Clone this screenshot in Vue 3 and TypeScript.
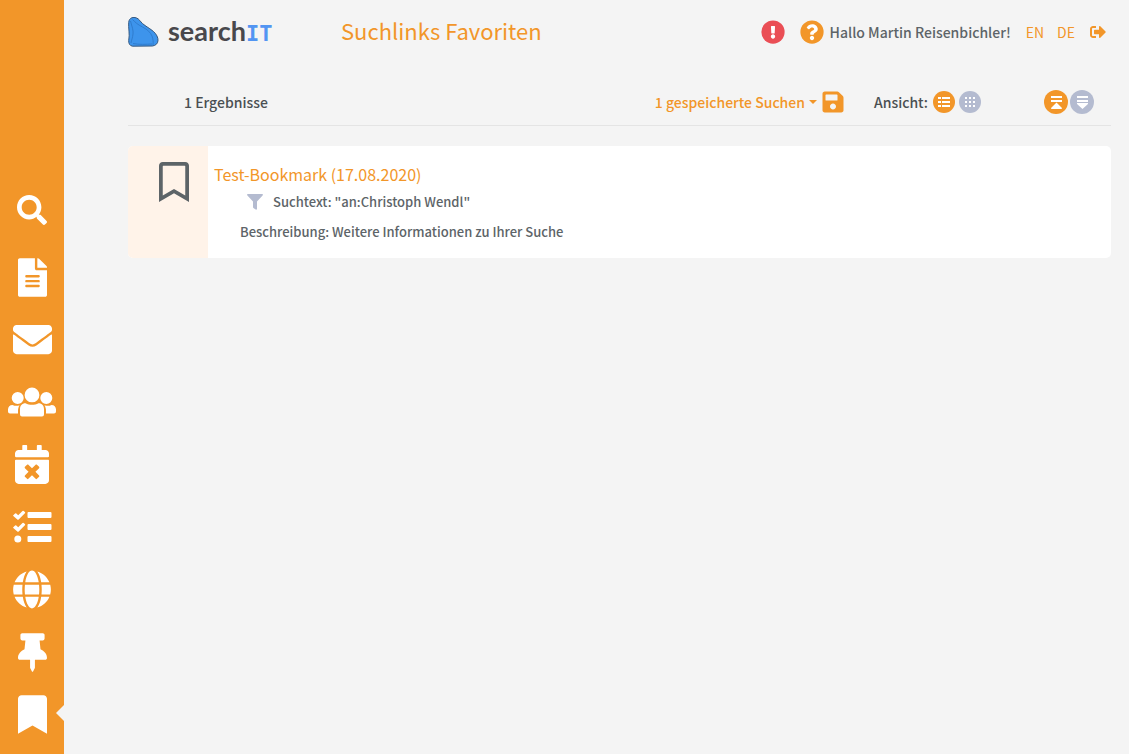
<script setup lang="ts">
import { ref } from 'vue'

interface NavItem {
  id: string
  label: string
  viewBox: string
  width: number
  height: number
  path: string
}

const navItems: NavItem[] = [
  { id: 'search', label: 'Suche', viewBox: '0 0 512 512', width: 30, height: 30, path: 'M505 442.7L405.3 343c-4.5-4.5-10.6-7-17-7H372c27.6-35.3 44-79.7 44-128C416 93.1 322.9 0 208 0S0 93.1 0 208s93.1 208 208 208c48.3 0 92.7-16.4 128-44v16.3c0 6.4 2.5 12.5 7 17l99.7 99.7c9.4 9.4 24.6 9.4 33.9 0l28.3-28.3c9.4-9.4 9.4-24.6.1-34zM208 336c-70.7 0-128-57.2-128-128 0-70.7 57.2-128 128-128 70.7 0 128 57.2 128 128 0 70.7-57.2 128-128 128z' },
  { id: 'files', label: 'Dokumente', viewBox: '0 0 384 512', width: 29, height: 39, path: 'M224 136V0H24C10.7 0 0 10.7 0 24v464c0 13.3 10.7 24 24 24h336c13.3 0 24-10.7 24-24V160H248c-13.2 0-24-10.8-24-24zm64 236c0 6.6-5.4 12-12 12H108c-6.6 0-12-5.4-12-12v-8c0-6.6 5.4-12 12-12h168c6.6 0 12 5.4 12 12v8zm0-64c0 6.6-5.4 12-12 12H108c-6.6 0-12-5.4-12-12v-8c0-6.6 5.4-12 12-12h168c6.6 0 12 5.4 12 12v8zm0-72v8c0 6.6-5.4 12-12 12H108c-6.6 0-12-5.4-12-12v-8c0-6.6 5.4-12 12-12h168c6.6 0 12 5.4 12 12zm96-114.1v6.1H256V0h6.1c6.4 0 12.5 2.5 17 7l97.9 98c4.5 4.5 7 10.6 7 16.9z' },
  { id: 'mail', label: 'E-Mails', viewBox: '0 0 512 512', width: 39, height: 39, path: 'M502.3 190.8c3.9-3.1 9.7-.2 9.7 4.7V400c0 26.5-21.5 48-48 48H48c-26.5 0-48-21.5-48-48V195.6c0-5 5.7-7.8 9.7-4.7 22.4 17.4 52.1 39.5 154.1 113.6 21.1 15.4 56.7 47.8 92.2 47.6 35.7.3 72-32.8 92.3-47.6 102-74.1 131.6-96.3 154-113.7zM256 320c23.2.4 56.6-29.2 73.4-41.4 132.7-96.3 142.8-104.7 173.4-128.7 5.8-4.5 9.2-11.5 9.2-18.9v-19c0-26.5-21.5-48-48-48H48c-26.5 0-48 21.5-48 48v19c0 7.4 3.4 14.3 9.2 18.9 30.6 23.9 40.7 32.4 173.4 128.7 16.8 12.2 50.2 41.8 73.4 41.4z' },
  { id: 'people', label: 'Kontakte', viewBox: '0 0 48 30', width: 48, height: 30, path: 'M24 .5a7.4 7.4 0 1 1 0 14.8a7.4 7.4 0 0 1 0-14.8zM9.7 5a6 6 0 1 1 0 12a6 6 0 0 1 0-12zM38.3 5a6 6 0 1 1 0 12a6 6 0 0 1 0-12zM17.5 16.2c4 2 9 2 13 0c3.5 0 5.5 2.5 5.5 6v5.3q0 2-2 2h-20q-2 0-2-2v-5.3c0-3.5 2-6 5.5-6zM4.5 18c1.8 1 5 1.2 7 .3c-1 1.7-1.5 3.5-1.5 5.7v2.5h-8q-2 0-2-2v-2c0-2.7 1.8-4.5 4.5-4.5zM43.5 18c-1.8 1-5 1.2-7 .3c1 1.7 1.5 3.5 1.5 5.7v2.5h8q2 0 2-2v-2c0-2.7-1.8-4.5-4.5-4.5z' },
  { id: 'calendar', label: 'Termine', viewBox: '0 0 448 512', width: 34, height: 39, path: 'M436 160H12c-6.6 0-12-5.4-12-12v-36c0-26.5 21.5-48 48-48h48V12c0-6.6 5.4-12 12-12h40c6.6 0 12 5.4 12 12v52h128V12c0-6.6 5.4-12 12-12h40c6.6 0 12 5.4 12 12v52h48c26.5 0 48 21.5 48 48v36c0 6.6-5.4 12-12 12zM12 192h424c6.6 0 12 5.4 12 12v260c0 26.5-21.5 48-48 48H48c-26.5 0-48-21.5-48-48V204c0-6.6 5.4-12 12-12zm257.3 160l48.1-48.1c4.7-4.7 4.7-12.3 0-17l-28.3-28.3c-4.7-4.7-12.3-4.7-17 0L224 306.7l-48.1-48.1c-4.7-4.7-12.3-4.7-17 0l-28.3 28.3c-4.7 4.7-4.7 12.3 0 17l48.1 48.1-48.1 48.1c-4.7 4.7-4.7 12.3 0 17l28.3 28.3c4.7 4.7 12.3 4.7 17 0l48.1-48.1 48.1 48.1c4.7 4.7 12.3 4.7 17 0l28.3-28.3c4.7-4.7 4.7-12.3 0-17L269.3 352z' },
  { id: 'tasks', label: 'Aufgaben', viewBox: '0 0 39 34', width: 39, height: 34, path: 'M15.5 2h22q1 0 1 1v4q0 1-1 1h-22q-1 0-1-1v-4q0-1 1-1zM15.5 14h22q1 0 1 1v4q0 1-1 1h-22q-1 0-1-1v-4q0-1 1-1zM15.5 26h22q1 0 1 1v4q0 1-1 1h-22q-1 0-1-1v-4q0-1 1-1zM4.8 25.5a3.5 3.5 0 1 1 0 7a3.5 3.5 0 0 1 0-7zM.3 5.2l1.8-1.8q.6-.5 1.2 0l1.9 1.8l4.3-4.3q.6-.5 1.2 0l1.2 1.2q.5.6 0 1.2l-6.2 6.2q-.7.6-1.4 0l-4-3.5q-.5-.5 0-.8zM.3 17.2l1.8-1.8q.6-.5 1.2 0l1.9 1.8l4.3-4.3q.6-.5 1.2 0l1.2 1.2q.5.6 0 1.2l-6.2 6.2q-.7.6-1.4 0l-4-3.5q-.5-.5 0-.8z' },
  { id: 'web', label: 'Web', viewBox: '0 0 496 512', width: 38, height: 39, path: 'M336.5 160C322 70.7 287.8 8 248 8s-74 62.7-88.5 152h177zM152 256c0 22.2 1.2 43.5 3.3 64h185.3c2.1-20.5 3.3-41.8 3.3-64s-1.2-43.5-3.3-64H155.3c-2.1 20.5-3.3 41.8-3.3 64zm324.7-96c-28.6-67.9-86.5-120.4-158-141.6 24.4 33.8 41.2 84.7 50 141.6h108zM177.2 18.4C105.8 39.6 47.8 92.1 19.3 160h108c8.7-56.9 25.5-107.8 49.9-141.6zM487.4 192H372.7c2.1 21 3.3 42.5 3.3 64s-1.2 43-3.3 64h114.6c5.5-20.5 8.6-41.8 8.6-64s-3.1-43.5-8.5-64zM120 256c0-21.5 1.2-43 3.3-64H8.6C3.2 212.5 0 233.8 0 256s3.2 43.5 8.6 64h114.6c-2-21-3.2-42.5-3.2-64zm39.5 96c14.5 89.3 48.7 152 88.5 152s74-62.7 88.5-152h-177zm159.3 141.6c71.4-21.2 129.4-73.7 158-141.6h-108c-8.8 56.9-25.6 107.8-50 141.6zM19.3 352c28.6 67.9 86.5 120.4 158 141.6-24.4-33.8-41.2-84.7-50-141.6h-108z' },
  { id: 'pins', label: 'Angepinnt', viewBox: '0 0 384 512', width: 29, height: 39, path: 'M298 214.3L285.8 96H328c13.3 0 24-10.7 24-24V24c0-13.3-10.7-24-24-24H56C42.7 0 32 10.7 32 24v48c0 13.3 10.7 24 24 24h42.2L86 214.3C37.5 236.8 0 277.3 0 328c0 13.3 10.7 24 24 24h136v104c0 1.2.3 2.5.8 3.6l24 48c2.9 5.9 11.4 5.9 14.3 0l24-48c.6-1.1.9-2.4.9-3.6V352h136c13.3 0 24-10.7 24-24 0-51.2-38-91.4-86-113.7z' },
  { id: 'favorites', label: 'Suchlinks Favoriten', viewBox: '0 0 384 512', width: 29, height: 39, path: 'M0 512V48C0 21.5 21.5 0 48 0h288c26.5 0 48 21.5 48 48v464L192 400 0 512z' },
]

const active = ref('favorites')
const view = ref<'list' | 'grid'>('list')
const order = ref<'up' | 'down'>('up')
const dots = [6, 10, 14]

const results = [
  {
    title: 'Test-Bookmark (17.08.2020)',
    query: 'Suchtext: "an:Christoph Wendl"',
    description: 'Beschreibung: Weitere Informationen zu Ihrer Suche',
  },
]
</script>

<template>
  <div class="app">
    <nav class="sidebar" aria-label="Bereiche">
      <button
        v-for="item in navItems"
        :key="item.id"
        type="button"
        class="nav-item"
        :class="{ active: active === item.id }"
        :aria-label="item.label"
        @click="active = item.id"
      >
        <svg :viewBox="item.viewBox" :width="item.width" :height="item.height" fill="currentColor" aria-hidden="true">
          <path :d="item.path" />
        </svg>
      </button>
    </nav>

    <main class="content">
      <header class="header">
        <a class="logo" href="#" aria-label="searchIT">
          <svg width="31" height="30" viewBox="0 0 31 30" aria-hidden="true">
            <path d="M4 .7C6.5-.2 10 1 11.6 3.3C14.5 8 21 10.5 25.5 14.5C28.5 17.3 30.2 20.5 30 23.5C29.8 26.8 27.5 28.5 24.5 29L4.5 29.2C1.8 28.8.5 26.5.7 23.5C2 17 .2 11 .7 5.5C.9 3 2 1.4 4 .7z" fill="#3d94ec" stroke="#35587f" />
            <path d="M2.5 4c1.5 6 3 9 2.5 13c-.4 4-1.5 6-2 9M4.5 2.5c3 3 5 5 10 7.5c5 2.5 8 5.5 9.5 9c1 3 1.5 5.5 1 9M5 26.5c6 1.3 13 .8 19 .5" fill="none" stroke="#2f7cce" />
          </svg>
          <span class="wordmark">search<span class="it">IT</span></span>
        </a>
        <h1>Suchlinks Favoriten</h1>
        <div class="account">
          <button type="button" class="icon-button alert" aria-label="Hinweise">
            <svg width="24" height="24" viewBox="0 0 512 512" aria-hidden="true">
              <circle cx="256" cy="256" r="248" fill="currentColor" />
              <path fill="#fff" d="M256 306c-25.4 0-46 20.6-46 46s20.6 46 46 46 46-20.6 46-46-20.6-46-46-46zm-43.7-165.3l7.4 136c.4 6.4 5.6 11.3 12 11.3h48.6c6.4 0 11.6-5 12-11.3l7.4-136c.4-6.9-5.1-12.7-12-12.7h-63.4c-6.9 0-12.4 5.8-12 12.7z" />
            </svg>
          </button>
          <button type="button" class="icon-button help" aria-label="Hilfe">
            <svg width="24" height="24" viewBox="0 0 512 512" aria-hidden="true">
              <circle cx="256" cy="256" r="248" fill="currentColor" />
              <path fill="#fff" d="M262.7 90c-54.5 0-89.3 23-116.6 63.8-3.5 5.3-2.4 12.4 2.7 16.2l34.7 26.3c5.2 4 12.6 3 16.7-2.1 17.9-22.7 30.1-35.8 57.3-35.8 20.4 0 45.7 13.1 45.7 33 0 15-12.4 22.7-32.5 34C247.1 238.5 216 254.9 216 296v4c0 6.6 5.4 12 12 12h56c6.6 0 12-5.4 12-12v-1.3c0-28.5 83.2-29.7 83.2-106.7 0-58-60.2-102-116.5-102zM256 338c-25.4 0-46 20.6-46 46s20.6 46 46 46 46-20.6 46-46-20.6-46-46-46z" />
            </svg>
          </button>
          <span class="greeting">Hallo Martin Reisenbichler!</span>
          <a class="lang" href="#en">EN</a>
          <a class="lang" href="#de">DE</a>
          <a class="logout" href="#logout" aria-label="Abmelden">
            <svg width="16" height="16" viewBox="0 0 512 512" fill="currentColor" aria-hidden="true">
              <path d="M497 273L329 441c-15 15-41 4.5-41-17v-96H152c-13.3 0-24-10.7-24-24v-96c0-13.3 10.7-24 24-24h136V88c0-21.4 25.9-32 41-17l168 168c9.3 9.4 9.3 24.6 0 34zM192 436v-40c0-6.6-5.4-12-12-12H96c-17.7 0-32-14.3-32-32V160c0-17.7 14.3-32 32-32h84c6.6 0 12-5.4 12-12V76c0-6.6-5.4-12-12-12H96c-53 0-96 43-96 96v192c0 53 43 96 96 96h84c6.6 0 12-5.4 12-12z" />
            </svg>
          </a>
        </div>
      </header>

      <div class="toolbar">
        <span class="count">1 Ergebnisse</span>
        <div class="tools">
          <button type="button" class="saved">1 gespeicherte Suchen<span class="caret"></span></button>
          <button type="button" class="icon-button save" aria-label="Suche speichern">
            <svg width="22" height="24" viewBox="0 0 448 512" aria-hidden="true">
              <path fill="currentColor" fill-rule="evenodd" d="M433.9 129.9l-83.8-83.8A48 48 0 0 0 316.1 32H48C21.5 32 0 53.5 0 80v352c0 26.5 21.5 48 48 48h352c26.5 0 48-21.5 48-48V163.9a48 48 0 0 0-14.1-34zM224 416c-35.3 0-64-28.7-64-64s28.7-64 64-64 64 28.7 64 64-28.7 64-64 64zm96-304.5V212c0 6.6-5.4 12-12 12H76c-6.6 0-12-5.4-12-12V108c0-6.6 5.4-12 12-12h228.5c3.2 0 6.2 1.3 8.5 3.5l3.5 3.5a12 12 0 0 1 3.5 8.5z" />
            </svg>
          </button>
          <span class="view-label">Ansicht:</span>
          <button type="button" class="round" :class="{ on: view === 'list' }" aria-label="Listenansicht" @click="view = 'list'">
            <svg width="22" height="22" viewBox="0 0 22 22" fill="#fff" aria-hidden="true">
              <path d="M5 6h3v2H5zM9 6h8v2H9zM5 10h3v2H5zM9 10h8v2H9zM5 14h3v2H5zM9 14h8v2H9z" />
            </svg>
          </button>
          <button type="button" class="round" :class="{ on: view === 'grid' }" aria-label="Kachelansicht" @click="view = 'grid'">
            <svg width="22" height="22" viewBox="0 0 22 22" fill="#fff" aria-hidden="true">
              <template v-for="y in dots" :key="y">
                <rect v-for="x in dots" :key="x" :x="x" :y="y" width="2" height="2" />
              </template>
            </svg>
          </button>
          <div class="order">
            <button type="button" class="round big" :class="{ on: order === 'up' }" aria-label="Aufsteigend" @click="order = 'up'">
              <svg width="24" height="24" viewBox="0 0 24 24" fill="#fff" aria-hidden="true">
                <path d="M7 6h11v2H7zM7 10h11v2H7zM12.5 12.5L18 18q.3 1-1 1H8q-1.3 0-1-1z" />
              </svg>
            </button>
            <button type="button" class="round big" :class="{ on: order === 'down' }" aria-label="Absteigend" @click="order = 'down'">
              <svg width="24" height="24" viewBox="0 0 24 24" fill="#fff" aria-hidden="true">
                <path d="M7 6h11v2H7zM7 10h11v2H7zM7 13h11q.3.7-.3 1.3L12.5 19l-5.2-4.7Q6.7 13.7 7 13z" />
              </svg>
            </button>
          </div>
        </div>
      </div>

      <article v-for="result in results" :key="result.title" class="card">
        <div class="badge">
          <svg width="30" height="40" viewBox="0 0 384 512" fill="currentColor" aria-hidden="true">
            <path d="M336 0H48C21.5 0 0 21.5 0 48v464l192-112 192 112V48c0-26.5-21.5-48-48-48zm0 428.4l-144-84-144 84V54a6 6 0 0 1 6-6h276c3.3 0 6 2.7 6 6v374.4z" />
          </svg>
        </div>
        <div class="details">
          <h2><a href="#bookmark">{{ result.title }}</a></h2>
          <p class="query">
            <svg width="16" height="16" viewBox="0 0 16 16" fill="#b4bbd0" aria-hidden="true">
              <path d="M.5 0h15q.8.7.1 1.5L10 7.5V15q-.4 1-1.3.6L6.4 14Q6 13.7 6 13V7.5L.4 1.5Q-.3.7.5 0z" />
            </svg>
            <span>{{ result.query }}</span>
          </p>
          <p class="description">{{ result.description }}</p>
        </div>
      </article>
    </main>
  </div>
</template>

<style>
body {
  margin: 0;
  background: #f4f4f4;
}
</style>

<style scoped>
.app {
  display: flex;
  min-height: 100vh;
  background: #f4f4f4;
  color: #5d6468;
  font-family: "Noto Sans CJK SC", "Noto Sans", sans-serif;
  font-size: 14px;
  font-weight: 500;
  line-height: 20px;
}

button {
  padding: 0;
  border: 0;
  background: none;
  color: inherit;
  font: inherit;
  cursor: pointer;
}

a {
  color: #f29629;
  text-decoration: none;
}

svg {
  display: block;
  flex: none;
}

.sidebar {
  display: flex;
  flex: none;
  flex-direction: column;
  box-sizing: border-box;
  width: 64px;
  padding: 179px 0 8px;
  background: #f29629;
  color: #fff;
}

.nav-item {
  position: relative;
  display: flex;
  flex: 1 1 62px;
  align-items: center;
  justify-content: center;
  max-height: 64px;
}

.nav-item:first-child {
  flex: none;
  height: 62px;
  margin-bottom: 5px;
}

.nav-item.active::after {
  position: absolute;
  top: 50%;
  right: 0;
  border: 8px solid transparent;
  border-left: 0;
  border-right-color: #f4f4f4;
  margin-top: -10px;
  content: "";
}

.content {
  flex: 1;
  min-width: 0;
  padding: 0 18px 0 64px;
}

.header {
  display: flex;
  align-items: center;
  height: 64px;
}

.logo {
  display: flex;
  align-items: center;
  gap: 9px;
  width: 213px;
}

.wordmark {
  color: #48484c;
  font-family: Lato, sans-serif;
  font-size: 27px;
  font-weight: 700;
  line-height: 32px;
}

.it {
  color: #5295f2;
  font-family: "DejaVu Sans Mono", monospace;
  font-size: 22px;
}

h1 {
  margin: 0;
  padding-bottom: 4px;
  color: #f29629;
  font-size: 22px;
  font-weight: 400;
  line-height: 32px;
}

.account {
  display: flex;
  align-items: center;
  margin-left: auto;
  padding-right: 5px;
}

.icon-button {
  color: #f29629;
}

.alert {
  margin-right: 15px;
  color: #ea4e55;
}

.help {
  margin-right: 6px;
}

.greeting {
  margin-right: 15px;
}

.lang {
  margin-right: 13px;
  font-weight: 400;
}

.logout {
  margin-left: 2px;
}

.toolbar {
  display: flex;
  align-items: center;
  justify-content: space-between;
  box-sizing: border-box;
  height: 62px;
  padding: 14px 17px 0 56px;
  border-bottom: 1px solid #e4e4e4;
  color: #4a4f52;
}

.tools {
  display: flex;
  align-items: center;
}

.saved {
  display: flex;
  align-items: center;
  gap: 4px;
  color: #f29629;
}

.caret {
  border: 4px solid transparent;
  border-top-color: #f29629;
  border-bottom: 0;
}

.save {
  margin: 0 30px 0 5px;
}

.view-label {
  margin-right: 5px;
}

.round {
  margin-right: 4px;
  border-radius: 50%;
  background: #b4bbd0;
}

.round.big {
  margin-right: 0;
}

.round.on {
  background: #f29629;
}

.order {
  display: flex;
  gap: 2px;
  margin-left: 59px;
}

.card {
  display: flex;
  margin-top: 20px;
  overflow: hidden;
  border-radius: 5px;
  background: #fff;
}

.badge {
  display: flex;
  justify-content: flex-end;
  box-sizing: border-box;
  width: 80px;
  padding: 16px 19px 0 0;
  background: #fff3e9;
}

.details {
  flex: 1;
  min-width: 0;
  padding: 16px 6px;
}

h2 {
  margin: 0;
  font-size: 16px;
  font-weight: 400;
  line-height: 24px;
}

.query {
  display: flex;
  align-items: center;
  gap: 10px;
  margin: 6px 0 10px 33px;
  font-size: 13px;
}

.description {
  margin: 0 0 0 26px;
  font-size: 13px;
}
</style>
